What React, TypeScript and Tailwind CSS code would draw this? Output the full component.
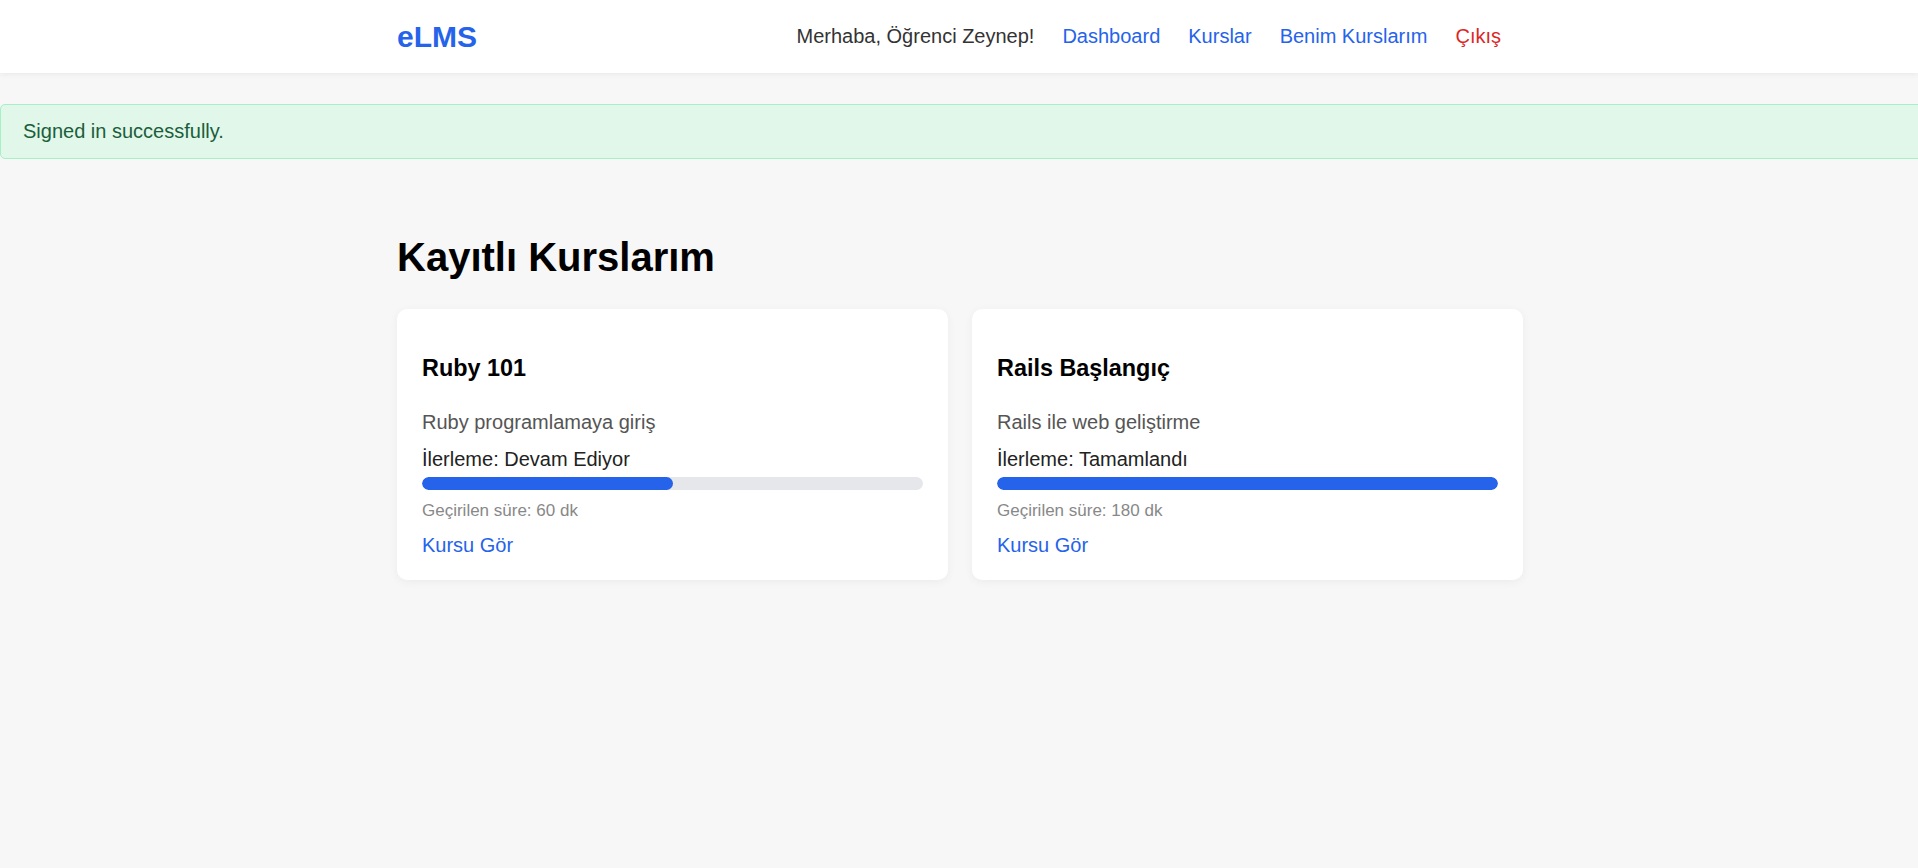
const courses = [
  {
    id: 1,
    title: 'Ruby 101',
    description: 'Ruby programlamaya giriş',
    status: 'Devam Ediyor',
    progress: 50,
    minutes: 60,
  },
  {
    id: 2,
    title: 'Rails Başlangıç',
    description: 'Rails ile web geliştirme',
    status: 'Tamamlandı',
    progress: 100,
    minutes: 180,
  },
]

function Header() {
  return (
    <header className="h-[73px] bg-white shadow-[0_2px_5px_rgba(0,0,0,0.05)]">
      <div className="mx-auto flex h-full w-[1128px] items-center justify-between pl-[2px]">
        <a href="#" className="text-[30px] font-bold leading-none text-[#2563eb]">
          eLMS
        </a>
        <nav className="flex items-center gap-[28px] pr-[22px] text-[20px] leading-[23px]">
          <span className="text-[#333]">Merhaba, Öğrenci Zeynep!</span>
          <a href="#" className="text-[#2563eb]">Dashboard</a>
          <a href="#" className="text-[#2563eb]">Kurslar</a>
          <a href="#" className="text-[#2563eb]">Benim Kurslarım</a>
          <button type="button" className="text-[#dc2626]">Çıkış</button>
        </nav>
      </div>
    </header>
  )
}

function CourseCard({ course }: { course: (typeof courses)[number] }) {
  return (
    <div className="rounded-[10px] bg-white px-[25px] pt-[25px] pb-[23px] shadow-[0_2px_10px_rgba(0,0,0,0.05)]">
      <h3 className="mt-[21px] text-[23.4px] font-bold leading-[27px] text-black">{course.title}</h3>
      <p className="mt-[28.5px] text-[20px] leading-[23px] text-[#555]">{course.description}</p>
      <p className="mt-[14.5px] text-[20px] leading-[23px] text-[#222]">İlerleme: {course.status}</p>
      <div className="mt-[6px] h-[12.5px] w-full overflow-hidden rounded-full bg-[#e5e7eb]">
        <div className="h-full rounded-full bg-[#2563eb]" style={{ width: `${course.progress}%` }} />
      </div>
      <p className="mt-[11px] text-[17px] leading-[20px] text-[#888]">Geçirilen süre: {course.minutes} dk</p>
      <a href="#" className="mt-[13px] block text-[20px] leading-[23px] text-[#2563eb]">
        Kursu Gör
      </a>
    </div>
  )
}

export default function App() {
  return (
    <div className="min-h-[868px] overflow-hidden bg-[#f7f7f7] font-['Liberation_Sans',Arial,sans-serif]">
      <Header />

      {/* Flash */}
      <div className="mt-[31px] w-[calc(100%+12px)] rounded-[5px] border border-[#a7efc7] bg-[#e0f7ea] py-[15px] pl-[22px] text-[20px] leading-[23px] text-[#1c5e3a]">
        Signed in successfully.
      </div>

      <main className="mx-auto w-[1128px] pl-[2px]">
        <h1 className="mt-[75px] text-[40px] font-bold leading-[46px] text-black">Kayıtlı Kurslarım</h1>
        <div className="mt-[29px] grid grid-cols-2 gap-[24px]">
          {courses.map((course) => (
            <CourseCard key={course.id} course={course} />
          ))}
        </div>
      </main>
    </div>
  )
}
